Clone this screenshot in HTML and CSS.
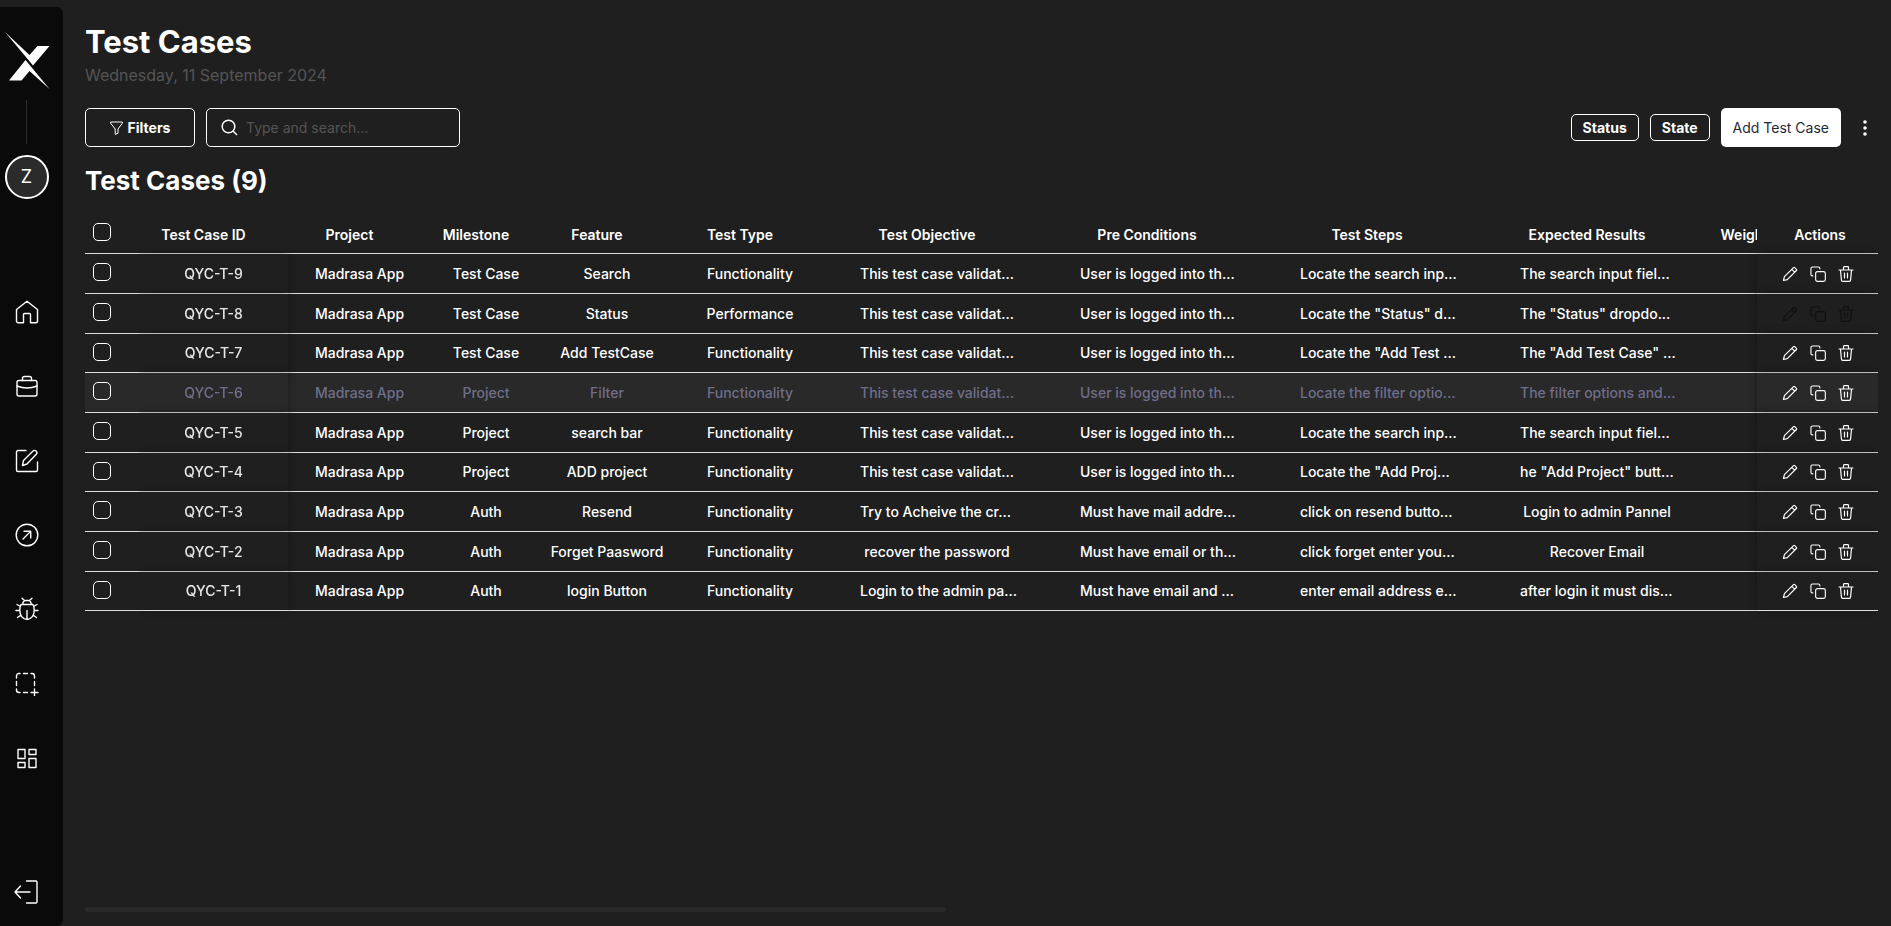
FILE: index.html
```html
<!DOCTYPE html>
<html lang="en">
<head>
<meta charset="utf-8">
<meta name="viewport" content="width=device-width, initial-scale=1">
<title>Test Cases</title>
<link rel="stylesheet" href="styles.css">
</head>
<body>
<svg class="sprite" aria-hidden="true">
  <symbol id="i-edit" viewBox="0 0 16 16"><path d="M1.5 14.500l.9-3.800L11.500 1.600q.6-.6 1.200 0l1.700 1.700q.6.6 0 1.200L5.300 13.600zM9.800 3.300l2.900 2.900"/></symbol>
  <symbol id="i-copy" viewBox="0 0 17 17"><rect x="6" y="6" width="10.300" height="10.300" rx="2"/><path d="M3 10.500h-.4a1.600 1.600 0 0 1-1.600-1.600V2.600A1.600 1.600 0 0 1 2.600 1h6.300a1.600 1.600 0 0 1 1.600 1.600v.6"/></symbol>
  <symbol id="i-trash" viewBox="0 0 16 16"><path d="M1 4h14M5.500 4V1.500q0-.8.800-.8h3.400q.8 0 .8.800V4M2.500 4l.9 10q.1 1.300 1.400 1.300h6.400q1.300 0 1.400-1.300l.9-10M6.500 7v5M9.500 7v5"/></symbol>
</svg>
<div class="app">
  <aside class="sidebar">
    <a class="logo" href="#" aria-label="Home page"><svg width="46" height="60" viewBox="0 0 46 60"><path d="M1 2 25.500 25 33.500 16h12L29 35.500zM5 50.500 21.500 30 45.500 59 25.500 41 17.500 50.500z"/></svg></a>
    <div class="rule"></div>
    <button class="avatar" type="button">Z</button>
    <nav class="nav" aria-label="Main">
      <a href="#" aria-label="Dashboard"><svg class="ico" viewBox="0 0 24 24"><path d="M1.500 9.500 12 1.200l10.500 8.300V21q0 1.800-1.800 1.800H15.500V14.500q0-1-1-1h-5q-1 0-1 1v8.300H3.300q-1.800 0-1.800-1.800z"/></svg></a>
      <a href="#" aria-label="Projects"><svg class="ico" viewBox="0 0 24 24"><rect x="2" y="6.500" width="20" height="15.500" rx="2"/><path d="M7.500 6.500v-2q0-2 2-2h5q2 0 2 2v2M2 12q10 4 20 0"/></svg></a>
      <a href="#" aria-label="Test cases"><svg class="ico" viewBox="0 0 24 24"><path d="M11 1.500H3q-1.500 0-1.500 1.500v18q0 1.500 1.500 1.500h18q1.500 0 1.500-1.500v-8M7.500 16.500l1-5L18 2q1.500-1.200 3 0 1.700 1.500.3 3.200L12 15z"/></svg></a>
      <a href="#" aria-label="Runs"><svg class="ico" viewBox="0 0 24 24"><circle cx="12" cy="12" r="10.800"/><path d="m8 16 7.500-7.500M9 8.300h6.700V15"/></svg></a>
      <a href="#" aria-label="Bugs"><svg class="ico" viewBox="0 0 24 24"><path d="M6 7.500h12q1.200 2 1.200 6c0 5-3.200 9-7.200 9s-7.200-4-7.200-9q0-4 1.200-6zM7.800 7.500q0-4 3-4h2.400q3 0 3 4M9.500 3.500 7 1.200M14.500 3.500 17 1.200M12 13.500v9M5.500 9.500 2 7.500M18.500 9.500 22 7.500M4.800 13.500H1M19.200 13.500H23M6 18l-3.500 2.500M18 18l3.500 2.500"/></svg></a>
      <a href="#" aria-label="New selection"><svg class="ico" viewBox="0 0 24 24"><path d="M1.500 6V4q0-2.500 2.500-2.500h1M8.500 1.500h4M16 1.500h1q2.500 0 2.500 2.500v2M1.500 9.500v4M19.500 9.500v4M1.500 17v1q0 2.500 2.500 2.500h1M8.500 20.500h4M19.500 17v7M16 20.500h7"/></svg></a>
      <a href="#" aria-label="Widgets"><svg class="ico" viewBox="0 0 24 24"><path d="M3 3.500h7v9H3zM14 3.500h7v5h-7zM3 16.500h7v5H3zM14 12.500h7v9h-7z"/></svg></a>
    </nav>
    <a class="logout" href="#" aria-label="Log out"><svg class="ico" viewBox="0 0 24 24"><path d="M12.500 1H22q1 0 1 1v20q0 1-1 1h-9.500M16 12H1M6.500 6 1 12l5.500 6"/></svg></a>
  </aside>
  <main class="main">
    <h1>Test Cases</h1>
    <p class="date">Wednesday, 11 September 2024</p>
    <div class="toolbar">
      <button class="filters" type="button"><svg width="13" height="14" viewBox="0 0 13 14"><path d="M.7 1h11.600v1.300L8 8v4.200L5.200 13.400V8L.7 2.300z"/></svg>Filters</button>
      <label class="search"><svg width="17" height="17" viewBox="0 0 17 17"><circle cx="7.500" cy="7.500" r="6.300"/><path d="m12 12 4 4"/></svg><input type="search" placeholder="Type and search..." aria-label="Search"></label>
      <div class="right">
        <button class="pill" type="button">Status</button>
        <button class="pill" type="button">State</button>
        <button class="add" type="button">Add Test Case</button>
        <button class="more" type="button" aria-label="More"><svg width="4" height="16" viewBox="0 0 4 16"><circle cx="2" cy="2" r="1.800"/><circle cx="2" cy="8" r="1.800"/><circle cx="2" cy="14" r="1.800"/></svg></button>
      </div>
    </div>
    <h2>Test Cases (9)</h2>
    <div class="scroller">
      <table>
        <colgroup><col class="c-check"><col class="c-id"><col class="c-project"><col class="c-mile"><col class="c-feat"><col class="c-type"><col class="c-text"><col class="c-text"><col class="c-text"><col class="c-text"><col class="c-weight"><col class="c-act"></colgroup>
        <thead><tr><th class="check"><input type="checkbox" aria-label="Select all"></th><th>Test Case ID</th><th>Project</th><th>Milestone</th><th>Feature</th><th>Test Type</th><th>Test Objective</th><th>Pre Conditions</th><th>Test Steps</th><th>Expected Results</th><th>Weightage</th><th class="act">Actions</th></tr></thead>
        <tbody>
          <tr><td class="check"><input type="checkbox" aria-label="Select QYC-T-9"></td><td class="id">QYC-T-9</td><td>Madrasa App</td><td>Test Case</td><td>Search</td><td>Functionality</td><td><div class="cut">This test case validat...</div></td><td><div class="cut">User is logged into th...</div></td><td><div class="cut">Locate the search inp...</div></td><td><div class="cut">The search input fiel...</div></td><td></td><td class="act"><div class="tools"><button type="button" aria-label="Edit"><svg><use href="#i-edit"/></svg></button><button type="button" aria-label="Copy"><svg><use href="#i-copy"/></svg></button><button type="button" aria-label="Delete"><svg><use href="#i-trash"/></svg></button></div></td></tr>
          <tr><td class="check"><input type="checkbox" aria-label="Select QYC-T-8"></td><td class="id">QYC-T-8</td><td>Madrasa App</td><td>Test Case</td><td>Status</td><td>Performance</td><td><div class="cut">This test case validat...</div></td><td><div class="cut">User is logged into th...</div></td><td><div class="cut">Locate the "Status" d...</div></td><td><div class="cut">The "Status" dropdo...</div></td><td></td><td class="act"><div class="tools off"><button type="button" disabled aria-label="Edit"><svg><use href="#i-edit"/></svg></button><button type="button" disabled aria-label="Copy"><svg><use href="#i-copy"/></svg></button><button type="button" disabled aria-label="Delete"><svg><use href="#i-trash"/></svg></button></div></td></tr>
          <tr><td class="check"><input type="checkbox" aria-label="Select QYC-T-7"></td><td class="id">QYC-T-7</td><td>Madrasa App</td><td>Test Case</td><td>Add TestCase</td><td>Functionality</td><td><div class="cut">This test case validat...</div></td><td><div class="cut">User is logged into th...</div></td><td><div class="cut">Locate the "Add Test ...</div></td><td><div class="cut">The "Add Test Case" ...</div></td><td></td><td class="act"><div class="tools"><button type="button" aria-label="Edit"><svg><use href="#i-edit"/></svg></button><button type="button" aria-label="Copy"><svg><use href="#i-copy"/></svg></button><button type="button" aria-label="Delete"><svg><use href="#i-trash"/></svg></button></div></td></tr>
          <tr class="active"><td class="check"><input type="checkbox" aria-label="Select QYC-T-6"></td><td class="id">QYC-T-6</td><td>Madrasa App</td><td>Project</td><td>Filter</td><td>Functionality</td><td><div class="cut">This test case validat...</div></td><td><div class="cut">User is logged into th...</div></td><td><div class="cut">Locate the filter optio...</div></td><td><div class="cut">The filter options and...</div></td><td></td><td class="act"><div class="tools"><button type="button" aria-label="Edit"><svg><use href="#i-edit"/></svg></button><button type="button" aria-label="Copy"><svg><use href="#i-copy"/></svg></button><button type="button" aria-label="Delete"><svg><use href="#i-trash"/></svg></button></div></td></tr>
          <tr><td class="check"><input type="checkbox" aria-label="Select QYC-T-5"></td><td class="id">QYC-T-5</td><td>Madrasa App</td><td>Project</td><td>search bar</td><td>Functionality</td><td><div class="cut">This test case validat...</div></td><td><div class="cut">User is logged into th...</div></td><td><div class="cut">Locate the search inp...</div></td><td><div class="cut">The search input fiel...</div></td><td></td><td class="act"><div class="tools"><button type="button" aria-label="Edit"><svg><use href="#i-edit"/></svg></button><button type="button" aria-label="Copy"><svg><use href="#i-copy"/></svg></button><button type="button" aria-label="Delete"><svg><use href="#i-trash"/></svg></button></div></td></tr>
          <tr><td class="check"><input type="checkbox" aria-label="Select QYC-T-4"></td><td class="id">QYC-T-4</td><td>Madrasa App</td><td>Project</td><td>ADD project</td><td>Functionality</td><td><div class="cut">This test case validat...</div></td><td><div class="cut">User is logged into th...</div></td><td><div class="cut">Locate the "Add Proj...</div></td><td><div class="cut">he "Add Project" butt...</div></td><td></td><td class="act"><div class="tools"><button type="button" aria-label="Edit"><svg><use href="#i-edit"/></svg></button><button type="button" aria-label="Copy"><svg><use href="#i-copy"/></svg></button><button type="button" aria-label="Delete"><svg><use href="#i-trash"/></svg></button></div></td></tr>
          <tr><td class="check"><input type="checkbox" aria-label="Select QYC-T-3"></td><td class="id">QYC-T-3</td><td>Madrasa App</td><td>Auth</td><td>Resend</td><td>Functionality</td><td><div class="cut">Try to Acheive the cr...</div></td><td><div class="cut">Must have mail addre...</div></td><td><div class="cut">click on resend butto...</div></td><td>Login to admin Pannel</td><td></td><td class="act"><div class="tools"><button type="button" aria-label="Edit"><svg><use href="#i-edit"/></svg></button><button type="button" aria-label="Copy"><svg><use href="#i-copy"/></svg></button><button type="button" aria-label="Delete"><svg><use href="#i-trash"/></svg></button></div></td></tr>
          <tr><td class="check"><input type="checkbox" aria-label="Select QYC-T-2"></td><td class="id">QYC-T-2</td><td>Madrasa App</td><td>Auth</td><td>Forget Paasword</td><td>Functionality</td><td>recover the password</td><td><div class="cut">Must have email or th...</div></td><td><div class="cut">click forget enter you...</div></td><td>Recover Email</td><td></td><td class="act"><div class="tools"><button type="button" aria-label="Edit"><svg><use href="#i-edit"/></svg></button><button type="button" aria-label="Copy"><svg><use href="#i-copy"/></svg></button><button type="button" aria-label="Delete"><svg><use href="#i-trash"/></svg></button></div></td></tr>
          <tr><td class="check"><input type="checkbox" aria-label="Select QYC-T-1"></td><td class="id">QYC-T-1</td><td>Madrasa App</td><td>Auth</td><td>login Button</td><td>Functionality</td><td><div class="cut">Login to the admin pa...</div></td><td><div class="cut">Must have email and ...</div></td><td><div class="cut">enter email address e...</div></td><td><div class="cut">after login it must dis...</div></td><td></td><td class="act"><div class="tools"><button type="button" aria-label="Edit"><svg><use href="#i-edit"/></svg></button><button type="button" aria-label="Copy"><svg><use href="#i-copy"/></svg></button><button type="button" aria-label="Delete"><svg><use href="#i-trash"/></svg></button></div></td></tr>
        </tbody>
      </table>
    </div>
    <div class="track"><div class="thumb"></div></div>
  </main>
</div>
</body>
</html>
```
FILE: styles.css
```css
* { box-sizing: border-box; }
body {
  margin: 0;
  background: #1f1f1f;
  color: #fff;
  font-family: Inter, "Liberation Sans", sans-serif;
  font-size: 14px;
  line-height: 20px;
}
button { font: inherit; color: inherit; background: none; border: 0; padding: 0; white-space: nowrap; }
svg { fill: none; stroke: currentColor; display: block; }
a { color: inherit; }
.sprite { width: 0; height: 0; position: absolute; }
.app { display: flex; height: 100vh; }

.sidebar {
  flex: none;
  width: 63px;
  margin-top: 7px;
  padding: 23px 10px 22px 0;
  background: #0a0a0a;
  border-radius: 0 6px 6px 0;
  display: flex;
  flex-direction: column;
  align-items: center;
}
.logo svg { fill: #fff; stroke: none; }
.rule { width: 1px; height: 44px; margin: 10px 0 11px; background: #2b2b2b; flex: none; }
.avatar {
  flex: none;
  width: 44px;
  height: 44px;
  border: 2px solid #fff;
  border-radius: 50%;
  background: #2b2b2b;
  font-size: 18px;
}
.nav { height: 470px; margin-top: 101px; display: flex; flex-direction: column; justify-content: space-between; }
.ico { width: 24px; height: 24px; stroke-width: 1.4; stroke-linecap: round; stroke-linejoin: round; }
.logout { margin-top: auto; margin-right: 2px; }

.main { flex: 1; min-width: 0; padding: 22px 13px 14px 22px; display: flex; flex-direction: column; }
h1, h2, p { margin: 0; }
h1 { font-size: 31px; line-height: 40px; font-weight: 700; }
.date { margin-top: 1px; font-size: 16px; line-height: 24px; color: #555; }
.toolbar { margin-top: 21px; display: flex; gap: 11px; height: 39px; }
.filters, .search, .pill { border: 1px solid #fff; border-radius: 5px; }
.filters { width: 110px; display: flex; align-items: center; justify-content: center; gap: 5px; font-weight: 700; }
.search { width: 254px; padding: 0 14px; display: flex; align-items: center; gap: 8px; }
.search svg { stroke-width: 1.5; flex: none; }
.search input { flex: 1; min-width: 0; border: 0; outline: 0; padding: 0; background: none; color: #fff; font: inherit; }
.search input::placeholder { color: #555; opacity: 1; }
.right { margin-left: auto; display: flex; align-items: center; gap: 11px; }
.pill { height: 27px; padding: 0 11px; font-weight: 700; }
.add { height: 39px; padding: 0 12px; border-radius: 5px; background: #fff; color: #1f2937; }
.more { width: 26px; display: grid; place-items: center; }
.more svg { fill: #fff; stroke: none; }
h2 { margin-top: 17px; font-size: 26px; line-height: 34px; font-weight: 700; }

.scroller { margin-top: 16px; flex: 1; min-height: 0; overflow: auto; scrollbar-width: none; }
table { table-layout: fixed; width: 1863px; border-collapse: separate; border-spacing: 0; }
.c-check { width: 54px; }
.c-id { width: 149px; }
.c-project { width: 143px; }
.c-mile { width: 110px; }
.c-feat { width: 132px; }
.c-type { width: 154px; }
.c-text { width: 220px; }
.c-weight { width: 120px; }
.c-act { width: 121px; }
th, td { padding: 0; text-align: center; white-space: nowrap; border-bottom: 1px solid #dedede; font-weight: 500; background: #1f1f1f; }
th { height: 40px; padding: 2px 20px 0 0; font-weight: 600; }
td { height: 40px; }
tr:nth-child(3n) td { height: 39px; }
.active td { background: #292929; color: #6f6e8a; }
th.check, td.check { padding: 0 0 0 8px; text-align: left; }
.check input { appearance: none; display: block; width: 18px; height: 18px; margin: 0 0 3px; border: 1px solid #fff; border-radius: 5px; }
.id { position: relative; color: #e6e6e6; box-shadow: 0 0 8px rgba(0, 0, 0, .35); clip-path: inset(-8px -8px -8px 0); }
.act { position: sticky; right: 0; }
th.act { padding: 2px 0 0 5px; }
td.act { box-shadow: 0 0 8px rgba(0, 0, 0, .35); color: #fff; }
.cut { width: 154px; margin: 0 auto; text-align: left; }
.tools { display: flex; justify-content: center; gap: 12px; }
.tools svg { width: 16px; height: 16px; stroke-width: 1.2; stroke-linejoin: round; stroke-linecap: round; }
.tools.off { color: #111; }
.track { height: 5px; }
.thumb { width: 48%; height: 5px; border-radius: 3px; background: #292929; }
```
